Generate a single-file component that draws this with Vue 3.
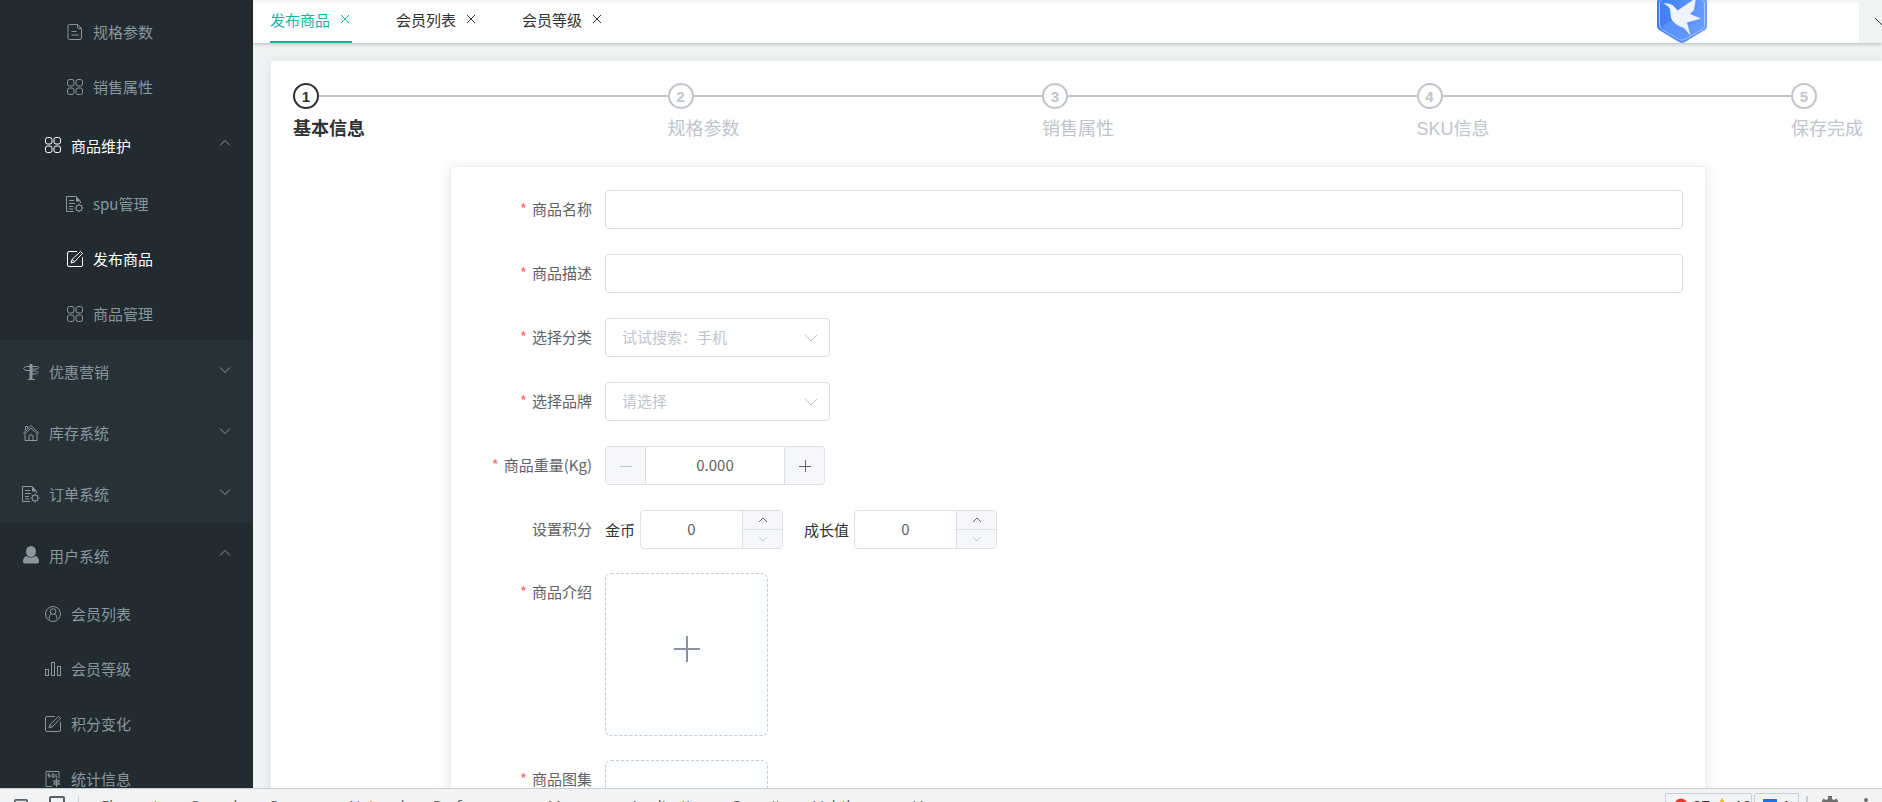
<script setup>
import { ref } from 'vue'

const menu = [
  {
    open: true,
    items: [
      { level: 3, icon: 'doc', text: '规格参数' },
      { level: 3, icon: 'grid', text: '销售属性' },
      { level: 2, icon: 'grid', text: '商品维护', arrow: 'up', active: true },
      { level: 3, icon: 'docgear', text: 'spu管理' },
      { level: 3, icon: 'edit', text: '发布商品', active: true },
      { level: 3, icon: 'grid', text: '商品管理' }
    ]
  },
  { open: false, items: [{ level: 1, icon: 'sign', text: '优惠营销', arrow: 'down' }] },
  { open: false, items: [{ level: 1, icon: 'home', text: '库存系统', arrow: 'down' }] },
  { open: false, items: [{ level: 1, icon: 'docgear', text: '订单系统', arrow: 'down' }] },
  {
    open: true,
    items: [
      { level: 1, icon: 'user', text: '用户系统', arrow: 'up' },
      { level: 2, leaf: true, icon: 'member', text: '会员列表' },
      { level: 2, leaf: true, icon: 'chart', text: '会员等级' },
      { level: 2, leaf: true, icon: 'edit', text: '积分变化' },
      { level: 2, leaf: true, icon: 'sql', text: '统计信息' }
    ]
  }
]

const tabs = ['发布商品', '会员列表', '会员等级']
const activeTab = ref(0)
const steps = ['基本信息', '规格参数', '销售属性', 'SKU信息', '保存完成']
const panels = ['Elements', 'Console', 'Sources', 'Network', 'Performance', 'Memory', 'Application', 'Security', 'Lighthouse', 'Vue']

const name = ref('')
const desc = ref('')
const category = ref('')
const brand = ref('')
const weight = ref('0.000')
const coin = ref('0')
const growth = ref('0')
</script>

<template>
  <div class="screen">
    <div class="workspace">
      <nav class="sidebar" aria-label="主菜单">
        <ul v-for="(group, g) in menu" :key="g" class="group" :class="{ open: group.open }">
          <li v-for="item in group.items" :key="item.text">
            <a
              href="#"
              class="item"
              :class="['level' + item.level, { active: item.active, leaf: !item.arrow }]"
            >
              <svg class="icon" viewBox="0 0 18 18" aria-hidden="true">
                <template v-if="item.icon === 'doc'">
                  <path d="M3.5 1.5h8l4 4v9.500a1.500 1.500 0 0 1-1.500 1.500H3.500A1.500 1.500 0 0 1 2 15V3a1.500 1.500 0 0 1 1.500-1.500z" />
                  <path d="M11.500 1.500v2.500a1.500 1.500 0 0 0 1.500 1.500h2.500M5.500 8.500h5M5.500 12h7" />
                </template>
                <template v-else-if="item.icon === 'grid'">
                  <rect x="1.500" y="1.500" width="6.500" height="6.500" rx="2" />
                  <rect x="10" y="1.500" width="6.500" height="6.500" rx="2" />
                  <rect x="1.500" y="10" width="6.500" height="6.500" rx="2" />
                  <rect x="10" y="10" width="6.500" height="6.500" rx="2" />
                </template>
                <template v-else-if="item.icon === 'docgear'">
                  <path d="M8 16.500H.500V1.500h9.500l4.500 5v1.500" />
                  <path class="solid" d="M10 1l5 5.500h-5z" />
                  <path d="M3 5.500h5M3 8.500h6M3 11.500h4M3 14h4" />
                  <circle cx="13" cy="13" r="3" />
                  <path d="M13 8.500v1.500M13 16v1.500M8.500 13H10M16 13h1.500M9.800 9.800l1 1M15.200 15.200l1 1M9.800 16.200l1-1M15.200 10.800l1-1" />
                </template>
                <template v-else-if="item.icon === 'edit'">
                  <path d="M11 1.500H3A1.500 1.500 0 0 0 1.500 3v12A1.500 1.500 0 0 0 3 16.500h12a1.500 1.500 0 0 0 1.500-1.500V7" />
                  <path d="M5 13l1-3.500 8.500-8 2 1.800-8 8.500zM6 9.500l2.500 2.300" />
                </template>
                <template v-else-if="item.icon === 'sign'">
                  <path d="M5.500 16.500h7.500M8 3.500H3.500L1.500 5.500l2 2H8M10 3.500h5.500L17 4.500l-1.500 1.500H10M10 8h4.500L16 9.500 14.500 11H10" />
                  <path d="M9 1v15.500" stroke-width="3" />
                </template>
                <template v-else-if="item.icon === 'home'">
                  <path d="M1 9.500L9 1.500l8 8M3 8v8.500h12V8M7 16.500V12a1 1 0 0 1 1-1h2a1 1 0 0 1 1 1v4.500M3.500 6.500v-4h2v2M4.500 8.500L9 4l4.500 4.500" />
                </template>
                <template v-else-if="item.icon === 'user'">
                  <ellipse class="solid" cx="9" cy="5.500" rx="5" ry="5.500" />
                  <path class="solid" d="M4.500 10c2.500 2 6.500 2 9 0 2.500.500 3.500 3 3.500 5.500 0 1.500-1 2-2 2H3c-1 0-2-.500-2-2C1 13 2 10.500 4.500 10z" />
                </template>
                <template v-else-if="item.icon === 'member'">
                  <circle cx="9" cy="9" r="7.500" />
                  <circle cx="9" cy="6.500" r="2.800" />
                  <path d="M5.200 14v-1.500c0-2 1.300-3.300 2.600-3.700M12.800 14v-1.500c0-2-1.300-3.300-2.600-3.700" />
                </template>
                <template v-else-if="item.icon === 'chart'">
                  <rect x="1.500" y="9.500" width="3" height="6" />
                  <rect x="7.500" y="2.500" width="3" height="13" />
                  <rect x="13.500" y="6.500" width="3" height="9" />
                </template>
                <template v-else>
                  <path d="M8 16.500H2v-15h13v7" />
                  <path d="M6 4H4v1.500h2V7H4M8 4h2v3H8zM10 7l.8.8M12 4v3h1.500" />
                  <circle cx="12.500" cy="12.500" r="2.500" />
                  <path d="M12.500 8.500V17M8.800 10.500l7.500 4M8.800 14.500l7.500-4" />
                </template>
              </svg>
              <span>{{ item.text }}</span>
              <svg v-if="item.arrow" class="arrow" viewBox="0 0 12 8" aria-hidden="true">
                <path :d="item.arrow === 'up' ? 'M1 6.500l5-5 5 5' : 'M1 1.500l5 5 5-5'" />
              </svg>
            </a>
          </li>
        </ul>
      </nav>

      <main class="main">
        <header class="tabbar">
          <div v-for="(tab, i) in tabs" :key="tab" class="tab" :class="{ current: i === activeTab }">
            <button type="button" class="tab-label" @click="activeTab = i">{{ tab }}</button>
            <button type="button" class="tab-close" :aria-label="'关闭' + tab">
              <svg viewBox="0 0 10 10" aria-hidden="true"><path d="M1 1l8 8M9 1L1 9" /></svg>
            </button>
          </div>
          <svg class="bird" viewBox="0 0 50 58" aria-hidden="true">
            <defs>
              <linearGradient id="hex" x1="0" y1="0" x2="1" y2="0">
                <stop offset="0" stop-color="#3a7dfa" />
                <stop offset="1" stop-color="#6b9dfd" />
              </linearGradient>
            </defs>
            <path d="M22 1.500q3-1.700 6 0l19 11q3 1.700 3 5v23q0 3.500-3 5l-19 11.500q-3 1.700-6 0l-19-11.500q-3-1.500-3-5v-23q0-3.300 3-5z" fill="url(#hex)" />
            <path d="M22.500 4.500q2.500-1.500 5 0l17.500 10q2.500 1.500 2.500 4.500v21q0 3-2.500 4.500L27.500 54.500q-2.500 1.500-5 0L5 44.500Q2.500 43 2.500 40V19q0-3 2.500-4.500z" fill="none" stroke="#a9c8ff" />
            <path d="M3 42l11-6 12 2 22 4-20 12q-3 1.500-6 0z" fill="#76a5ff" opacity=".4" />
            <path d="M6 18.500q4-.500 7 .500 3 .500 5 3.500l2.500 3L39 13l-2 12-4 4 11 4.500-14 4 3.500 13L27 43q-10-3-13-10l-1-9q-2-4-7-5.500z" fill="#edf3ff" />
          </svg>
          <button type="button" class="more" aria-label="更多标签操作">
            <svg viewBox="0 0 16 10" aria-hidden="true"><path d="M1 1l7 7 7-7" /></svg>
          </button>
        </header>

        <section class="card">
          <ol class="steps">
            <li v-for="(step, i) in steps" :key="step" class="step" :class="{ now: i === 0 }">
              <span class="rail"><span class="dot">{{ i + 1 }}</span></span>
              <span class="step-title">{{ step }}</span>
            </li>
          </ol>

          <form class="form" @submit.prevent>
            <div class="row">
              <label class="label required" for="name">商品名称</label>
              <input id="name" v-model="name" class="field wide" type="text" />
            </div>
            <div class="row">
              <label class="label required" for="desc">商品描述</label>
              <input id="desc" v-model="desc" class="field wide" type="text" />
            </div>
            <div class="row">
              <label class="label required" for="category">选择分类</label>
              <span class="pick">
                <select id="category" v-model="category" class="field">
                  <option value="">试试搜索：手机</option>
                </select>
                <svg viewBox="0 0 14 8" aria-hidden="true"><path d="M1 1l6 6 6-6" /></svg>
              </span>
            </div>
            <div class="row">
              <label class="label required" for="brand">选择品牌</label>
              <span class="pick">
                <select id="brand" v-model="brand" class="field">
                  <option value="">请选择</option>
                </select>
                <svg viewBox="0 0 14 8" aria-hidden="true"><path d="M1 1l6 6 6-6" /></svg>
              </span>
            </div>
            <div class="row">
              <label class="label required" for="weight">商品重量(Kg)</label>
              <span class="number">
                <button type="button" class="side left" aria-label="减少" disabled>
                  <svg viewBox="0 0 14 14" aria-hidden="true"><path d="M1 7.500h12" /></svg>
                </button>
                <input id="weight" v-model="weight" type="text" />
                <button type="button" class="side right" aria-label="增加">
                  <svg viewBox="0 0 14 14" aria-hidden="true"><path d="M1 7.500h12M7.500 1v12" /></svg>
                </button>
              </span>
            </div>
            <div class="row">
              <span class="label">设置积分</span>
              <label class="inline" for="coin">金币</label>
              <span class="number small">
                <input id="coin" v-model="coin" type="text" />
                <span class="spin">
                  <button type="button" aria-label="增加金币"><svg viewBox="0 0 10 6" aria-hidden="true"><path d="M1 5l4-4 4 4" /></svg></button>
                  <button type="button" aria-label="减少金币" disabled><svg viewBox="0 0 10 6" aria-hidden="true"><path d="M1 1l4 4 4-4" /></svg></button>
                </span>
              </span>
              <label class="inline second" for="growth">成长值</label>
              <span class="number small">
                <input id="growth" v-model="growth" type="text" />
                <span class="spin">
                  <button type="button" aria-label="增加成长值"><svg viewBox="0 0 10 6" aria-hidden="true"><path d="M1 5l4-4 4 4" /></svg></button>
                  <button type="button" aria-label="减少成长值" disabled><svg viewBox="0 0 10 6" aria-hidden="true"><path d="M1 1l4 4 4-4" /></svg></button>
                </span>
              </span>
            </div>
            <div class="uploads">
              <div class="row">
                <span id="intro" class="label required">商品介绍</span>
                <button type="button" class="upload" aria-labelledby="intro">
                  <svg viewBox="0 0 28 28" aria-hidden="true"><path d="M1 14h26M14 1v26" /></svg>
                </button>
              </div>
              <div class="row">
                <span id="album" class="label required">商品图集</span>
                <button type="button" class="upload" aria-labelledby="album">
                  <svg viewBox="0 0 28 28" aria-hidden="true"><path d="M1 14h26M14 1v26" /></svg>
                </button>
              </div>
            </div>
          </form>
        </section>
      </main>
    </div>

    <footer class="devtools">
      <div class="toolbar">
        <button type="button" class="tool inspect" aria-label="Inspect">
          <svg viewBox="0 0 16 16" aria-hidden="true"><rect x="1" y="1" width="14" height="13" rx="1" /></svg>
        </button>
        <button type="button" class="tool device" aria-label="Device">
          <svg viewBox="0 0 16 20" aria-hidden="true"><rect x="1" y="1" width="14" height="18" rx="1" /></svg>
        </button>
        <span class="divider"></span>
        <div class="panels">
          <button v-for="p in panels" :key="p" type="button" class="panel">{{ p }}</button>
        </div>
        <button type="button" class="badge">
          <svg viewBox="0 0 14 14" aria-hidden="true"><circle cx="7" cy="7" r="6.500" fill="#e53935" /></svg>
          <span>27</span>
          <svg viewBox="0 0 14 14" aria-hidden="true"><path d="M7 0l7 13H0z" fill="#e8b60c" /></svg>
          <span>10</span>
        </button>
        <button type="button" class="badge notes">
          <svg viewBox="0 0 14 14" aria-hidden="true"><path d="M0 1h14v10H5l-3 3v-3H0z" fill="#1a73e8" /></svg>
          <span>1</span>
        </button>
        <span class="divider tail"></span>
        <button type="button" class="tool gear" aria-label="Settings">
          <svg viewBox="0 0 20 20" aria-hidden="true">
            <path d="M8 0h4v3l2 1 2.500-1.500 2 3.500L16 8v4l2.500 2-2 3.500L14 16l-2 1v3H8v-3l-2-1-2.500 1.500-2-3.500L4 12V8L1.500 6l2-3.500L6 4l2-1z" fill="#6e6e6e" />
          </svg>
        </button>
        <button type="button" class="tool" aria-label="More">
          <svg viewBox="0 0 16 16" aria-hidden="true"><g fill="#6e6e6e"><circle cx="8" cy="2" r="2" /><circle cx="8" cy="8" r="2" /><circle cx="8" cy="14" r="2" /></g></svg>
        </button>
      </div>
    </footer>
  </div>
</template>

<style>
body {
  margin: 0;
  overflow: hidden;
}
</style>

<style scoped>
* {
  box-sizing: border-box;
}

.screen {
  display: flex;
  flex-direction: column;
  height: 100vh;
  overflow: hidden;
  font-family: "Noto Sans CJK SC", "Liberation Sans", sans-serif;
  font-size: 15px;
  color: #303133;
  background: #f1f4f5;
}

button,
input,
select {
  font: inherit;
  color: inherit;
  margin: 0;
  padding: 0;
  border: 0;
  background: none;
}

svg {
  display: block;
  flex: none;
  fill: none;
  stroke: currentColor;
}

ul,
ol {
  list-style: none;
  margin: 0;
  padding: 0;
}

.workspace {
  flex: 1;
  min-height: 0;
  display: flex;
  overflow: hidden;
}

/* sidebar */
.sidebar {
  flex: none;
  width: 253px;
  overflow: hidden;
  background: #263238;
}

.group.open {
  background: #212b30;
}

.group.open:first-child {
  padding-top: 3px;
}

.item {
  display: flex;
  align-items: center;
  gap: 9px;
  height: 61px;
  padding-top: 2px;
  padding-right: 22px;
  color: #8a979e;
  text-decoration: none;
}

.open .item {
  height: 62px;
}

.open .item.leaf {
  height: 55px;
}

.item.level1 {
  padding-left: 22px;
}

.item.level2 {
  padding-left: 44px;
}

.item.level3 {
  padding-left: 66px;
}

.item.active {
  color: #fff;
}

.icon {
  width: 18px;
  height: 18px;
}

.solid {
  fill: currentColor;
  stroke: none;
}

.arrow {
  width: 12px;
  height: 8px;
  margin-left: auto;
  margin-bottom: 4px;
  color: #8a979e;
}

/* tab bar */
.main {
  flex: 1;
  min-width: 0;
  display: flex;
  flex-direction: column;
}

.tabbar {
  position: relative;
  z-index: 1;
  flex: none;
  display: flex;
  gap: 44px;
  height: 43px;
  padding-left: 17px;
  background: linear-gradient(#f1f1f1, #fff 4px);
  box-shadow: 0 1px 4px rgba(0, 0, 0, 0.25);
}

.tab {
  display: flex;
  align-items: center;
  gap: 10px;
  width: 82px;
  padding-bottom: 3px;
  border-bottom: 2px solid transparent;
}

.tab.current {
  color: #17b3a3;
  border-color: #17b3a3;
}

.tab-close svg {
  width: 10px;
  height: 10px;
}

.bird {
  position: absolute;
  right: 175px;
  bottom: 0;
  width: 50px;
  height: 58px;
  stroke: none;
}

.more {
  display: flex;
  align-items: center;
  width: 23px;
  margin-left: auto;
  padding-left: 15px;
  overflow: hidden;
  background: #f1f4f5;
}

.more svg {
  width: 16px;
  height: 10px;
}

/* content card */
.card {
  flex: none;
  margin: 17px 0 0 17px;
  padding: 22px 19px 40px 22px;
  border: 1px solid #ebeef5;
  border-right: 0;
  border-radius: 4px 0 0 4px;
  background: #fff;
  box-shadow: 0 2px 13px rgba(0, 0, 0, 0.1);
}

.steps {
  display: flex;
  height: 83px;
}

.step {
  flex: 1;
  color: #c0c4cc;
}

.step:last-child {
  flex: none;
}

.rail {
  display: flex;
  align-items: center;
}

.step:not(:last-child) .rail::after {
  content: "";
  flex: 1;
  height: 2px;
  background: #c0c4cc;
}

.dot {
  display: flex;
  align-items: center;
  justify-content: center;
  width: 26px;
  height: 26px;
  border: 2px solid #c0c4cc;
  border-radius: 50%;
  font: bold 15px "Liberation Sans", sans-serif;
}

.step-title {
  display: block;
  font-family: "Liberation Sans", "Noto Sans CJK SC", sans-serif;
  font-size: 18px;
  line-height: 40px;
}

.now {
  color: #303133;
}

.now .dot {
  border-color: #303133;
}

.now .step-title {
  font-weight: bold;
}

/* form */
.form {
  display: flex;
  flex-direction: column;
  gap: 25px;
  width: 80%;
  margin: 0 auto;
  padding: 23px 22px;
  border: 1px solid #ebeef5;
  border-radius: 4px;
  background: #fff;
  box-shadow: 0 2px 13px rgba(0, 0, 0, 0.1);
  color: #606266;
}

.row {
  display: flex;
}

.label {
  flex: none;
  width: 132px;
  padding-right: 13px;
  line-height: 37px;
  text-align: right;
}

.required::before {
  content: "*";
  margin-right: 5px;
  color: #f56c6c;
}

.field {
  height: 39px;
  padding: 0 16px 2px;
  border: 1px solid #dcdfe6;
  border-radius: 4px;
  background: #fff;
}

.wide {
  flex: 1;
}

.pick {
  position: relative;
  width: 225px;
}

.pick select {
  display: block;
  width: 100%;
  appearance: none;
  color: #c0c4cc;
}

.pick svg {
  position: absolute;
  right: 12px;
  top: 16px;
  width: 14px;
  height: 8px;
  color: #c0c4cc;
  pointer-events: none;
}

.number {
  display: flex;
  width: 220px;
  height: 39px;
  border: 1px solid #dcdfe6;
  border-radius: 4px;
  overflow: hidden;
}

.number input {
  flex: 1;
  min-width: 0;
  padding-bottom: 2px;
  text-align: center;
}

.side {
  display: flex;
  align-items: center;
  justify-content: center;
  width: 40px;
  background: #f5f7fa;
}

.side svg {
  width: 14px;
  height: 14px;
}

.left {
  border-right: 1px solid #dcdfe6;
}

.right {
  border-left: 1px solid #dcdfe6;
}

button:disabled {
  color: #c0c4cc;
}

.small {
  width: 143px;
}

.spin {
  display: flex;
  flex-direction: column;
  width: 40px;
  border-left: 1px solid #dcdfe6;
}

.spin button {
  flex: 1;
  display: flex;
  align-items: center;
  justify-content: center;
  background: #f5f7fa;
}

.spin button + button {
  border-top: 1px solid #dcdfe6;
}

.spin svg {
  width: 10px;
  height: 6px;
}

.inline {
  margin-right: 5px;
  line-height: 39px;
  color: #303133;
}

.second {
  margin-left: 21px;
}

.uploads {
  display: flex;
  flex-direction: column;
  gap: 24px;
  margin-top: -1px;
}

.upload {
  display: flex;
  align-items: center;
  justify-content: center;
  width: 163px;
  height: 163px;
  padding-bottom: 12px;
  border: 1px dashed #c0ccda;
  border-radius: 6px;
  background: #fbfdff;
  color: #8c939d;
}

.upload svg {
  width: 28px;
  height: 28px;
  stroke-width: 2;
}

/* browser tools strip */
.devtools {
  position: relative;
  z-index: 2;
  flex: none;
  height: 14px;
  overflow: hidden;
  border-top: 1px solid #cacdd1;
  background: #f1f3f4;
  color: #5a5d61;
}

.toolbar {
  display: flex;
  align-items: center;
  height: 34px;
  padding-right: 8px;
  font-family: "Open Sans", "Noto Sans", sans-serif;
  font-size: 15px;
}

.tool svg {
  width: 16px;
  height: 16px;
  stroke-width: 2;
}

.inspect {
  margin-left: 13px;
}

.inspect svg {
  height: 14px;
}

.device {
  margin-left: 20px;
}

.device svg {
  height: 20px;
}

.divider {
  width: 1px;
  height: 20px;
  margin: 0 22px 0 13px;
  background: #cacdd1;
}

.panels {
  flex: 1;
  display: flex;
  gap: 24px;
  padding-bottom: 2px;
}

.badge {
  display: flex;
  align-items: center;
  gap: 5px;
  width: 87px;
  height: 26px;
  padding: 0 8px 2px;
  border: 1px solid #cacdd1;
  border-radius: 2px;
  color: #333;
}

.badge svg {
  width: 14px;
  height: 14px;
  stroke: none;
}

.notes {
  width: 45px;
  margin-left: 2px;
}

.tail {
  width: 2px;
  margin: 0 12px 0 7px;
}

.gear {
  margin-right: 18px;
}

.gear svg {
  width: 20px;
  height: 20px;
}

.gear svg,
.tool g {
  stroke: none;
}
</style>
